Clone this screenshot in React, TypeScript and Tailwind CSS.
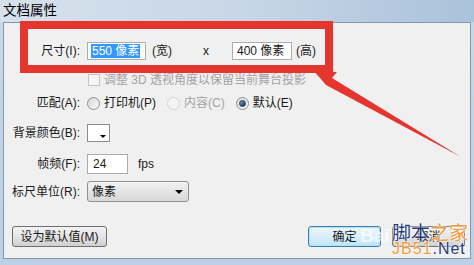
const font = "font-['Liberation_Sans','Noto_Sans_CJK_SC',sans-serif]";

const Radio = ({ checked, disabled }: { checked?: boolean; disabled?: boolean }) => (
  <span
    className={`flex items-center justify-center w-[13px] h-[13px] rounded-full border ${
      disabled
        ? "border-[#d2d2d2] bg-[#f4f4f4]"
        : "border-[#8e8f8f] bg-gradient-to-br from-[#d8d8d8] to-[#fafafa]"
    }`}
  >
    {checked && (
      <span className="w-[7px] h-[7px] rounded-full bg-gradient-to-br from-[#7fa9d3] to-[#0f2f55] border border-[#1c3b5e]" />
    )}
  </span>
);

const Row = ({ label, children, className = "" }: { label: string; children: React.ReactNode; className?: string }) => (
  <div className={`flex items-center ${className}`}>
    <span className="w-[76px] text-right whitespace-nowrap">{label}</span>
    <div className="ml-[7px] flex items-center">{children}</div>
  </div>
);

const App = () => {
  return (
    <div className={`relative w-[474px] h-[265px] overflow-hidden bg-gradient-to-b from-[#c9d8e8] to-[#bccfe3] text-[12px] text-[#1a1a1a] ${font}`}>
      {/* Title bar */}
      <div className="h-[22px] flex items-center pl-[3px] bg-gradient-to-r from-[#d6e1ec] via-[#c8d7e7] to-[#aac2da]">
        <span className="text-[13.5px] text-black leading-none">文档属性</span>
      </div>

      {/* Client area */}
      <div className="ml-[3px] w-[468px] h-[237px] border border-[#8497ad] bg-[#f0f0f0] flex flex-col">
        <Row label="尺寸(I):" className="mt-[19px] h-[17px]">
          <div className="w-[59px] h-[18px] border border-[#abadb3] bg-white flex items-center pl-[3px]">
            <span className="bg-[#3399ff] text-white leading-[14px] px-[1px]">550 像素</span>
          </div>
          <span className="ml-[6px]">(宽)</span>
          <span className="ml-[31px]">x</span>
          <div className="ml-[23px] w-[60px] h-[18px] border border-[#abadb3] bg-white flex items-center pl-[4px]">
            400 像素
          </div>
          <span className="ml-[4px]">(高)</span>
        </Row>

        <div className="flex items-center mt-[14px] h-[13px] pl-[84px]">
          <span className="w-[12px] h-[12px] border border-[#c4c4c4] bg-[#f6f6f6]" />
          <span className="ml-[4px] text-[#a3a3a3]">调整 3D 透视角度以保留当前舞台投影</span>
        </div>

        <Row label="匹配(A):" className="mt-[9px] h-[16px]">
          <Radio />
          <span className="ml-[4px]">打印机(P)</span>
          <span className="ml-[11px]"><Radio disabled /></span>
          <span className="ml-[4px] text-[#a3a3a3]">内容(C)</span>
          <span className="ml-[11px]"><Radio checked /></span>
          <span className="ml-[4px]">默认(E)</span>
        </Row>

        <Row label="背景颜色(B):" className="mt-[13px] h-[18px]">
          <div className="relative w-[23px] h-[18px] border border-[#8c8c8c] bg-white">
            <span className="absolute right-[3px] bottom-[3px] w-0 h-0 border-l-[3px] border-r-[3px] border-t-[3px] border-l-transparent border-r-transparent border-t-black" />
          </div>
        </Row>

        <Row label="帧频(F):" className="mt-[12px] h-[20px]">
          <div className="w-[41px] h-[20px] border border-[#abadb3] bg-white flex items-center pl-[5px]">24</div>
          <span className="ml-[10px]">fps</span>
        </Row>

        <Row label="标尺单位(R):" className="mt-[7px] h-[21px]">
          <div className="w-[102px] h-[21px] rounded-[3px] border border-[#8e8f8f] bg-gradient-to-b from-[#f2f2f2] to-[#d8d8d8] flex items-center pl-[4px] pr-[5px] justify-between">
            <span>像素</span>
            <span className="w-0 h-0 border-l-[4px] border-r-[4px] border-t-[4px] border-l-transparent border-r-transparent border-t-black" />
          </div>
        </Row>

        <div className="flex items-center mt-[24px] h-[21px] pl-[8px] pr-[5px]">
          <button className="w-[95px] h-[21px] rounded-[3px] border border-[#707070] bg-gradient-to-b from-[#f2f2f2] via-[#e6e6e6] to-[#cfcfcf]">
            设为默认值(M)
          </button>
          <button className="ml-auto w-[73px] h-[21px] rounded-[3px] border border-[#3c7fb1] bg-gradient-to-b from-[#eaf6fd] via-[#d9eefa] to-[#bee6fd] shadow-[inset_0_0_0_1px_#b4e0f7]">
            确定
          </button>
          <button className="ml-[11px] w-[73px] h-[21px] rounded-[3px] border border-[#707070] bg-gradient-to-b from-[#f2f2f2] via-[#e6e6e6] to-[#cfcfcf]">
            取消
          </button>
        </div>
      </div>

      {/* Annotation: red box */}
      <div className="absolute left-[20px] top-[21px] w-[313px] h-[52px] border-[8px] border-[#e5352f]" />

      {/* Annotation: arrow */}
      <svg className="absolute left-0 top-0" width="474" height="265" viewBox="0 0 474 265">
        <polygon points="314,71 337,72 332,78 461,157 326,85" fill="#e5352f" />
      </svg>

      {/* Watermarks */}
      <span className="absolute left-[360px] top-[226px] text-[19px] font-bold text-white/70 leading-none">Bai</span>
      <div className="absolute left-[392px] top-[222px] flex flex-col items-start leading-none [text-shadow:0_0_2px_white,0_0_2px_white]">
        <span className="text-[19px] font-['Noto_Sans_CJK_SC',sans-serif]">
          <span className="text-[#26387a]">脚本</span>
          <span className="text-[#f39b3c]">之家</span>
        </span>
        <span className="text-[16px] tracking-[1px]">
          <span className="text-[#f39b3c]">JB51</span>
          <span className="text-[#26387a]">.Net</span>
        </span>
      </div>
    </div>
  );
};

export default App;
